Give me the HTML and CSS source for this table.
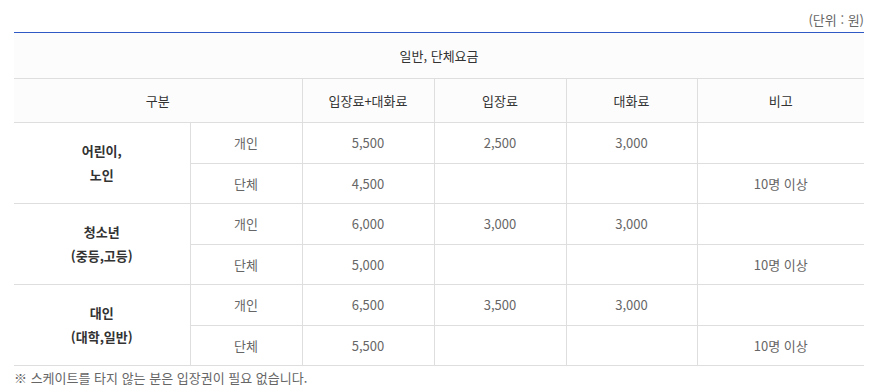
FILE: index.html
```html
<!DOCTYPE html>
<html lang="ko">
<head>
<meta charset="utf-8">
<link rel="stylesheet" href="styles.css">
</head>
<body>
<div class="wrap">
  <div class="unit">(단위 : 원)</div>
  <table class="fee">
    <colgroup>
      <col class="c1"><col class="c2"><col class="c3"><col class="c4"><col class="c5"><col class="c6">
    </colgroup>
    <thead>
      <tr class="h1"><th colspan="6">일반, 단체요금</th></tr>
      <tr class="h2"><th colspan="2">구분</th><th>입장료+대화료</th><th>입장료</th><th>대화료</th><th>비고</th></tr>
    </thead>
    <tbody>
      <tr class="r1"><th rowspan="2" class="grp">어린이,<br>노인</th><td>개인</td><td>5,500</td><td>2,500</td><td>3,000</td><td></td></tr>
      <tr class="r2"><td>단체</td><td>4,500</td><td></td><td></td><td>10명 이상</td></tr>
      <tr class="r1"><th rowspan="2" class="grp">청소년<br>(중등,고등)</th><td>개인</td><td>6,000</td><td>3,000</td><td>3,000</td><td></td></tr>
      <tr class="r2"><td>단체</td><td>5,000</td><td></td><td></td><td>10명 이상</td></tr>
      <tr class="r1"><th rowspan="2" class="grp">대인<br>(대학,일반)</th><td>개인</td><td>6,500</td><td>3,500</td><td>3,000</td><td></td></tr>
      <tr class="r2"><td>단체</td><td>5,500</td><td></td><td></td><td>10명 이상</td></tr>
    </tbody>
  </table>
  <p class="note">※ 스케이트를 타지 않는 분은 입장권이 필요 없습니다.</p>
</div>
</body>
</html>
```
FILE: styles.css
```css
html, body { margin: 0; padding: 0; background: #fff; }
body {
  font-family: "Noto Sans CJK KR", "Noto Sans", sans-serif;
  font-size: 13px;
  color: #666;
}
.wrap { padding: 0 9px 0 14px; }
.unit {
  text-align: right;
  padding-top: 10px;
  line-height: 20px;
  height: 22px;
  color: #666;
}
.fee {
  width: 850px;
  border-collapse: collapse;
  table-layout: fixed;
  border-top: 1px solid #2f59c4;
}
.c1 { width: 176px; }
.c2 { width: 112px; }
.c3 { width: 132px; }
.c4 { width: 132px; }
.c5 { width: 131px; }
.c6 { width: 167px; }
.fee th, .fee td {
  border: 1px solid #dedede;
  text-align: center;
  vertical-align: middle;
  padding: 0;
  line-height: 20px;
}
.fee tr > :first-child { border-left: none; }
.fee tr > :last-child { border-right: none; }
.fee thead th {
  background: #fcfcfc;
  font-weight: normal;
  color: #333;
}
.fee tr.h1 th { border-top: none; height: 45px; }
.fee tr.h2 th { height: 43px; }
.fee tbody tr { height: 40px; }
.fee tbody tr.r1 { height: 41px; }
.fee th.grp {
  font-weight: bold;
  color: #333;
  line-height: 24px;
  border-left: none;
}
.fee tbody td { color: #666; }
.note {
  margin: 0;
  padding-top: 2px;
  line-height: 20px;
  color: #666;
}
```
